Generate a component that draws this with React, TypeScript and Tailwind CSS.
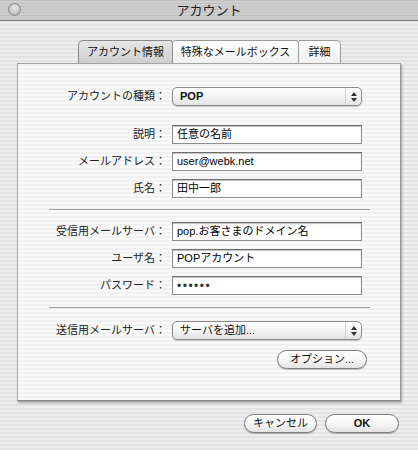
import React from "react";

const font = "font-['Liberation_Sans','Noto_Sans_CJK_JP',sans-serif]";

const Field = ({ children }: { children?: React.ReactNode }) => (
  <div className="flex h-[19px] w-[190px] items-center border border-[#8c8c8c] border-t-[#6e6e6e] bg-white pl-[4px] text-[11px] leading-none text-black shadow-[inset_0_1px_1px_rgba(0,0,0,0.25)]">
    {children}
  </div>
);

const Popup = ({ children, bold }: { children: React.ReactNode; bold?: boolean }) => (
  <div className="flex h-[19px] w-[190px] items-center rounded-[5px] border border-[#8a8a8a] bg-[linear-gradient(180deg,#ffffff_0%,#f4f4f4_50%,#e4e4e4_100%)] shadow-[0_1px_1px_rgba(0,0,0,0.2)]">
    <div className={`flex-1 pl-[7px] text-[11px] leading-none text-[#111] ${bold ? "font-bold" : ""}`}>
      {children}
    </div>
    <div className="flex h-full w-[16px] flex-col items-center justify-center gap-[2px] border-l border-[#d0d0d0]">
      <svg width="6" height="4" viewBox="0 0 6 4">
        <path d="M0 4 L3 0 L6 4 Z" fill="#333" />
      </svg>
      <svg width="6" height="4" viewBox="0 0 6 4">
        <path d="M0 0 L3 4 L6 0 Z" fill="#333" />
      </svg>
    </div>
  </div>
);

const Row = ({ label, children, mt }: { label: string; children: React.ReactNode; mt: string }) => (
  <div className={`flex items-center ${mt}`}>
    <div className="w-[149px] pr-[1px] text-right text-[11px] leading-none text-[#222]">{label}</div>
    <div className="ml-[5px]">{children}</div>
  </div>
);

const Pill = ({ children, w, bold }: { children: React.ReactNode; w: string; bold?: boolean }) => (
  <div
    className={`flex h-[19px] ${w} items-center justify-center rounded-full border border-[#7c7c7c] bg-[linear-gradient(180deg,#ffffff_0%,#f6f6f6_55%,#e2e2e2_100%)] text-[11px] leading-none text-[#111] shadow-[0_1px_1px_rgba(0,0,0,0.25)] ${bold ? "font-bold" : ""}`}
  >
    {children}
  </div>
);

export default function App() {
  return (
    <div className={`h-[450px] w-[418px] overflow-hidden ${font} bg-[repeating-linear-gradient(180deg,#e3e3e3_0px,#e3e3e3_2px,#eeeeee_2px,#eeeeee_4px)]`}>
      {/* title bar */}
      <div className="relative flex h-[21px] items-center justify-center border-b border-[#7a7a7a] bg-[repeating-linear-gradient(180deg,#c2c2c2_0px,#c2c2c2_1px,#cecece_1px,#cecece_3px)]">
        <div className="absolute left-[8px] top-[3px] h-[13px] w-[13px] rounded-full border border-[#8a8a8a] bg-[radial-gradient(circle_at_50%_35%,#eeeeee_0%,#c4c4c4_60%,#a0a0a0_100%)]" />
        <span className="text-[13px] leading-none text-[#222]">アカウント</span>
      </div>

      {/* tabs */}
      <div className="mt-[19px] flex h-[23px] justify-center pl-[1px]">
        <div className="flex h-full w-[95px] items-center justify-center rounded-tl-[5px] rounded-tr-[3px] border border-b-0 border-[#8a8a8a] bg-[linear-gradient(180deg,#e6e6e6_0%,#cfcfcf_100%)] text-[11px] leading-none text-[#111]">
          アカウント情報
        </div>
        <div className="flex h-full w-[126px] items-center justify-center rounded-t-[3px] border border-b-0 border-l-0 border-[#9a9a9a] bg-[linear-gradient(180deg,#ffffff_0%,#f0f0f0_100%)] text-[11px] leading-none text-[#111]">
          特殊なメールボックス
        </div>
        <div className="flex h-full w-[42px] items-center justify-center rounded-tr-[5px] border border-b-0 border-l-0 border-[#9a9a9a] bg-[linear-gradient(180deg,#ffffff_0%,#f0f0f0_100%)] text-[11px] leading-none text-[#111]">
          詳細
        </div>
      </div>

      {/* panel */}
      <div className="ml-[17px] h-[338px] w-[384px] border border-[#a4a4a4] border-b-[#888] border-r-[#999] bg-[repeating-linear-gradient(180deg,#f1f1f1_0px,#f1f1f1_2px,#fafafa_2px,#fafafa_4px)] shadow-[1px_2px_2px_rgba(0,0,0,0.3)]">
        <div className="pt-[23px]">
          <Row label="アカウントの種類：" mt="mt-0">
            <Popup bold>POP</Popup>
          </Row>
          <Row label="説明：" mt="mt-[19px]">
            <Field>任意の名前</Field>
          </Row>
          <Row label="メールアドレス：" mt="mt-[8px]">
            <Field>user@webk.net</Field>
          </Row>
          <Row label="氏名：" mt="mt-[8px]">
            <Field>田中一郎</Field>
          </Row>

          <div className="ml-[31px] mr-[30px] mt-[11px] border-t border-[#9c9c9c]" />

          <Row label="受信用メールサーバ：" mt="mt-[12px]">
            <Field>pop.お客さまのドメイン名</Field>
          </Row>
          <Row label="ユーザ名：" mt="mt-[8px]">
            <Field>POPアカウント</Field>
          </Row>
          <Row label="パスワード：" mt="mt-[8px]">
            <Field>
              <span className="text-[12px] tracking-[1.5px] text-[#333]">••••••</span>
            </Field>
          </Row>

          <div className="ml-[31px] mr-[30px] mt-[12px] border-t border-[#9c9c9c]" />

          <Row label="送信用メールサーバ：" mt="mt-[13px]">
            <Popup>サーバを追加...</Popup>
          </Row>

          <div className="ml-[259px] mt-[10px]">
            <Pill w="w-[90px]">オプション...</Pill>
          </div>
        </div>
      </div>

      {/* bottom buttons */}
      <div className="mt-[13px] flex pl-[244px]">
        <Pill w="w-[73px]">キャンセル</Pill>
        <div className="ml-[8px]">
          <Pill w="w-[74px]" bold>
            OK
          </Pill>
        </div>
      </div>
    </div>
  );
}
